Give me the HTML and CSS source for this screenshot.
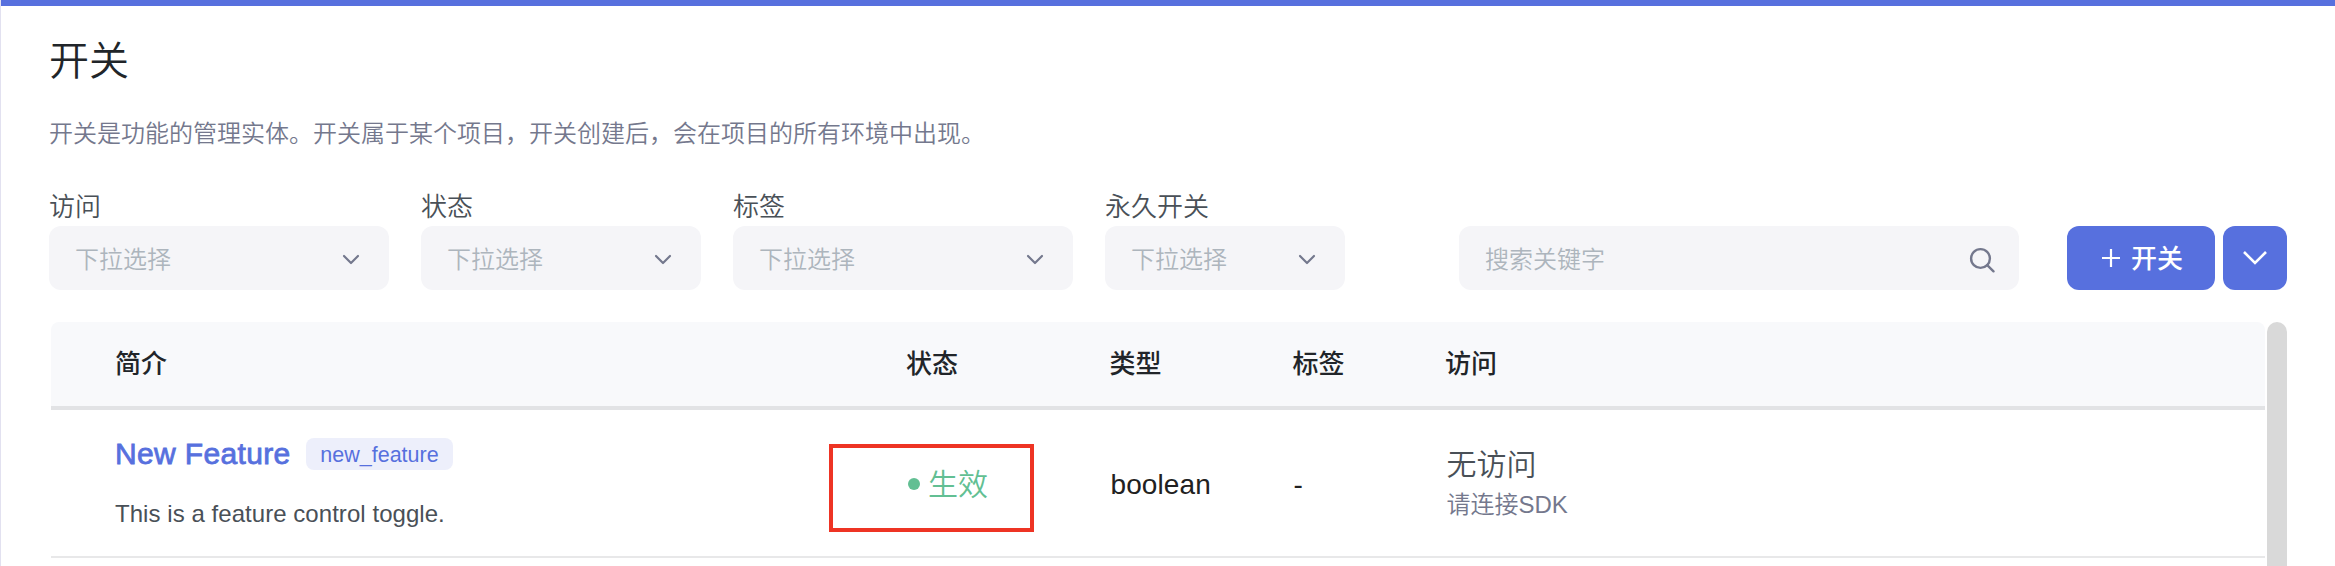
FILE: index.html
```html
<!DOCTYPE html>
<html lang="zh-CN">
<head>
<meta charset="utf-8">
<title>开关</title>
<link rel="stylesheet" href="styles.css">
</head>
<body>
<main class="page">
  <h1 class="title">开关</h1>
  <p class="desc">开关是功能的管理实体。开关属于某个项目，开关创建后，会在项目的所有环境中出现。</p>

  <div class="toolbar">
    <div class="filter">
      <span class="label">访问</span>
      <div class="select wide"><span>下拉选择</span><svg class="chev" width="18" height="12" viewBox="0 0 18 12"><path d="M2 2L9 9L16 2"/></svg></div>
    </div>
    <div class="filter">
      <span class="label">状态</span>
      <div class="select mid"><span>下拉选择</span><svg class="chev" width="18" height="12" viewBox="0 0 18 12"><path d="M2 2L9 9L16 2"/></svg></div>
    </div>
    <div class="filter">
      <span class="label">标签</span>
      <div class="select wide"><span>下拉选择</span><svg class="chev" width="18" height="12" viewBox="0 0 18 12"><path d="M2 2L9 9L16 2"/></svg></div>
    </div>
    <div class="filter">
      <span class="label">永久开关</span>
      <div class="select small"><span>下拉选择</span><svg class="chev" width="18" height="12" viewBox="0 0 18 12"><path d="M2 2L9 9L16 2"/></svg></div>
    </div>
    <div class="select search"><span>搜索关键字</span><svg class="loupe" width="26" height="26" viewBox="0 0 26 26"><circle cx="11.5" cy="11.5" r="9.4"/><path d="M18.2 18.2L24.5 24.3"/></svg></div>
    <div class="actions">
      <button class="btn create"><svg class="plus" width="20" height="20" viewBox="0 0 20 20"><path d="M1 10H19M10 1V19"/></svg><span>开关</span></button>
      <button class="btn more"><svg width="26" height="16" viewBox="0 0 26 16"><path d="M2 2L13 13L24 2"/></svg></button>
    </div>
  </div>

  <div class="list">
    <div class="table">
      <div class="row head">
        <span>简介</span><span>状态</span><span>类型</span><span>标签</span><span>访问</span>
      </div>
      <div class="row item">
        <div class="intro">
          <div class="name-line"><span class="name">New Feature</span><span class="chip">new_feature</span></div>
          <div class="note">This is a feature control toggle.</div>
        </div>
        <div class="status"><i class="dot"></i><span>生效</span><div class="highlight"></div></div>
        <div class="type">boolean</div>
        <div class="type">-</div>
        <div class="visit"><div class="visit-main">无访问</div><div class="visit-sub">请连接SDK</div></div>
      </div>
    </div>
    <div class="scrollbar"></div>
  </div>
</main>
</body>
</html>
```

FILE: styles.css
```css
* { box-sizing: border-box; }

body {
  margin: 0;
  background: #fff;
  font-family: "Liberation Sans", "Noto Sans CJK SC", sans-serif;
  font-weight: 350;
  overflow: hidden;
}

.page {
  height: 566px;
  padding: 0 48px;
  border-left: 1px solid #e2e1f0;
  overflow: hidden;
  background: linear-gradient(#5770de, #5770de) 0 0 / 100% 6px no-repeat;
}

.title {
  margin: 0;
  padding-top: 32px;
  font-size: 40px;
  line-height: 58px;
  font-weight: 350;
  color: #212529;
}

.desc {
  margin: 26px 0 0;
  font-size: 24px;
  line-height: 36px;
  color: #74788d;
}

.toolbar {
  display: flex;
  align-items: flex-end;
  height: 138px;
}

.filter { margin-right: 32px; }

.label {
  display: block;
  font-size: 26px;
  line-height: 38px;
  color: #495057;
}

.select {
  display: flex;
  align-items: center;
  justify-content: space-between;
  height: 64px;
  padding: 4px 29px 0 26px;
  border-radius: 12px;
  background: #f5f5f8;
  color: #adb5bd;
  font-size: 24px;
  line-height: 36px;
}

.wide { width: 340px; }
.mid { width: 280px; }
.small { width: 240px; }
.search { width: 560px; margin-left: 82px; padding-right: 24px; }

.chev, .loupe {
  fill: none;
  stroke: #74788d;
  stroke-width: 2.2;
  stroke-linecap: round;
  stroke-linejoin: round;
}

.loupe { stroke-width: 2.4; }

.actions { display: flex; gap: 8px; margin-left: 48px; }

.btn {
  display: flex;
  align-items: center;
  justify-content: center;
  height: 64px;
  padding: 0;
  border: 0;
  border-radius: 12px;
  background: #5770de;
  color: #fff;
  font: 500 26px/38px "Liberation Sans", "Noto Sans CJK SC", sans-serif;
}

.btn span { padding: 2px 0 0 1px; }
.btn svg { fill: none; stroke: #fff; stroke-width: 2.6; }
.btn .plus { stroke-width: 2.2; margin: 0 9px 0 2px; }
.create { width: 148px; }
.more { width: 64px; }

.list {
  display: flex;
  gap: 2px;
  margin: 32px 0 0 2px;
}

.table { width: 2214px; }

.row {
  display: grid;
  grid-template-columns: 791px 203.5px 183px 152.5px 1fr;
  padding-left: 64px;
}

.head {
  height: 88px;
  border-bottom: 4px solid #e2e3e5;
  border-radius: 8px 8px 0 0;
  background: #f8f9fb;
  color: #212529;
  font-size: 26px;
  line-height: 85px;
  font-weight: 500;
}

.item {
  height: 148px;
  align-items: center;
  border-bottom: 2px solid #e8e8e9;
}

.intro { align-self: start; padding-top: 28px; }

.name-line { display: flex; align-items: center; height: 32px; }

.name {
  width: 191px;
  font-size: 30px;
  letter-spacing: 0.35px;
  color: #5770de;
  -webkit-text-stroke: 0.8px #5770de;
}

.chip {
  width: 147px;
  height: 32px;
  border-radius: 8px;
  background: #edeffb;
  color: #5770de;
  font-size: 21.5px;
  line-height: 35px;
  text-align: center;
}

.note {
  margin-top: 26px;
  font-size: 24px;
  line-height: 36px;
  letter-spacing: 0.05px;
  color: #495057;
}

.status {
  position: relative;
  display: flex;
  align-items: center;
  gap: 8px;
  margin-top: 2px;
  padding-left: 2px;
  font-size: 30px;
  line-height: 44px;
  color: #62bf93;
}

.status span { margin: 1px 0 -1px; }

.dot { width: 12px; height: 12px; border-radius: 50%; background: #62bf93; }

.highlight {
  position: absolute;
  left: -77px;
  top: -18px;
  width: 205px;
  height: 88px;
  border: 4px solid #ee3424;
}

.type {
  padding: 4px 0 0 1px;
  font-size: 28px;
  letter-spacing: 0.1px;
  color: #212121;
}

.visit { padding-left: 1.5px; margin-top: -2px; }
.visit-main { font-size: 30px; line-height: 44px; color: #495057; }
.visit-sub { font-size: 24px; line-height: 35px; color: #74788d; }

.scrollbar {
  width: 20px;
  height: 300px;
  border-radius: 10px;
  background: #d9d9d9;
}
```
